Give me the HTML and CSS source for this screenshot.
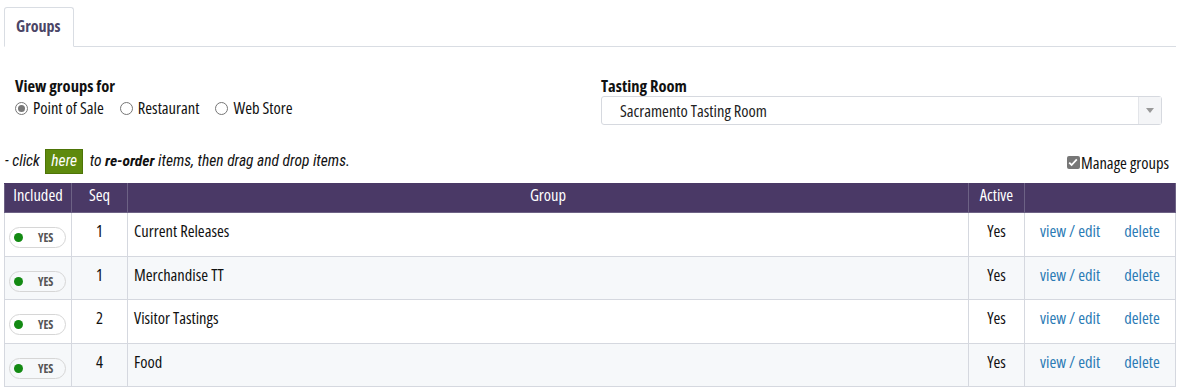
FILE: index.html
```html
<!DOCTYPE html>
<html>
<head>
<meta charset="utf-8">
<link rel="stylesheet" href="styles.css">
</head>
<body>
<div class="page">
  <div class="tabs">
    <div class="tab">Groups</div>
  </div>
  <div class="filters">
    <div class="filter-left">
      <div class="label">View groups for</div>
      <div class="radios">
        <label class="radio"><span class="rb checked"></span>Point of Sale</label>
        <label class="radio"><span class="rb"></span>Restaurant</label>
        <label class="radio"><span class="rb"></span>Web Store</label>
      </div>
    </div>
    <div class="filter-right">
      <div class="label">Tasting Room</div>
      <div class="select">
        <span class="select-text">Sacramento Tasting Room</span>
        <span class="select-arrow"><svg width="8" height="5" viewBox="0 0 8 5"><path d="M0 0h8L4 5z" fill="#999"/></svg></span>
      </div>
    </div>
  </div>
  <div class="toolbar">
    <div class="hint">- click <span class="here">here</span> to <b>re-order</b> items, then drag and drop items.</div>
    <label class="manage"><span class="cb"><svg width="10" height="9" viewBox="0 0 10 9"><path d="M1.2 4.6l2.4 2.4L8.8 1.4" stroke="#fff" stroke-width="1.8" fill="none"/></svg></span>Manage groups</label>
  </div>
  <table class="grid">
    <colgroup>
      <col class="w-inc"><col class="w-seq"><col><col class="w-act"><col class="w-ops">
    </colgroup>
    <thead>
      <tr>
        <th>Included</th>
        <th>Seq</th>
        <th>Group</th>
        <th>Active</th>
        <th></th>
      </tr>
    </thead>
    <tbody>
      <tr>
        <td class="c-inc"><span class="toggle"><span class="dot"></span>YES</span></td>
        <td class="c-seq">1</td>
        <td class="c-grp">Current Releases</td>
        <td class="c-act">Yes</td>
        <td class="c-ops"><a>view / edit</a><a>delete</a></td>
      </tr>
      <tr>
        <td class="c-inc"><span class="toggle"><span class="dot"></span>YES</span></td>
        <td class="c-seq">1</td>
        <td class="c-grp">Merchandise TT</td>
        <td class="c-act">Yes</td>
        <td class="c-ops"><a>view / edit</a><a>delete</a></td>
      </tr>
      <tr>
        <td class="c-inc"><span class="toggle"><span class="dot"></span>YES</span></td>
        <td class="c-seq">2</td>
        <td class="c-grp">Visitor Tastings</td>
        <td class="c-act">Yes</td>
        <td class="c-ops"><a>view / edit</a><a>delete</a></td>
      </tr>
      <tr>
        <td class="c-inc"><span class="toggle"><span class="dot"></span>YES</span></td>
        <td class="c-seq">4</td>
        <td class="c-grp">Food</td>
        <td class="c-act">Yes</td>
        <td class="c-ops"><a>view / edit</a><a>delete</a></td>
      </tr>
    </tbody>
  </table>
</div>
</body>
</html>
```
FILE: styles.css
```css
* { box-sizing: border-box; }
body {
  margin: 0;
  font-family: "Open Sans", "Roboto", sans-serif;
  font-stretch: 75%;
  font-size: 16.5px;
  color: #111;
  background: #fff;
}
.page { padding: 7px 11px 0 4px; }
.tabs {
  display: flex;
  border-bottom: 1px solid #d9dde3;
  height: 40px;
}
.tab {
  width: 70px;
  height: 40px;
  border: 1px solid #d9dde3;
  border-bottom: 1px solid #fff;
  border-radius: 3px 3px 0 0;
  font-weight: bold;
  font-size: 16px;
  line-height: 20px;
  color: #4b4566;
  padding: 8px 0 0 11px;
  background: #fff;
}
.filters {
  display: flex;
  padding: 29px 0 0 11px;
}
.filter-left { width: 586px; }
.filter-right { width: 561px; }
.label { font-weight: bold; line-height: 20px; }
.radios { display: flex; gap: 16px; margin-top: 2px; line-height: 20px; }
.radio { display: flex; align-items: center; }
.rb {
  width: 13px; height: 13px; border-radius: 50%;
  border: 1px solid #767676; margin-right: 5px; background: #fff;
  display: inline-block; position: relative;
}
.rb.checked { border-color: #777; }
.rb.checked::after {
  content: ""; position: absolute; left: 2px; top: 2px;
  width: 7px; height: 7px; border-radius: 50%; background: #777;
}
.select {
  margin-top: 0;
  height: 29px;
  border: 1px solid #d6d9df;
  border-radius: 3px;
  display: flex;
  align-items: center;
  justify-content: space-between;
}
.select-text { padding-left: 18px; color: #222; }
.select-arrow {
  width: 23px; height: 27px; border-left: 1px solid #e3e5e9;
  background: #f4f5f7; display: flex; align-items: center; justify-content: center;
}
.toolbar {
  display: flex;
  justify-content: space-between;
  align-items: center;
  margin-top: 23px;
  height: 26px;
}
.hint {
  font-family: "Roboto Condensed", "Roboto", sans-serif;
  font-stretch: 75%;
  font-size: 15.5px;
  font-style: italic;
  padding-left: 1px;
}
.here {
  display: inline-block;
  background: #5e8a0d;
  color: #fff;
  padding: 2px 5px 3px;
  border: 1px solid #4d7407;
  margin: 0 3px 0 2px;
}
.manage { display: flex; align-items: center; margin-top: 2px; padding-right: 7px; }
.cb {
  width: 13px; height: 13px; background: #777; border-radius: 2px;
  display: inline-flex; align-items: center; justify-content: center; margin-right: 1px;
}
.grid {
  margin-top: 9px;
  width: 1172px;
  border-collapse: collapse;
  table-layout: fixed;
}
.w-inc { width: 67px; }
.w-seq { width: 56px; }
.w-act { width: 56px; }
.w-ops { width: 151px; }
.grid th {
  background: #4a3966;
  color: #fff;
  font-weight: normal;
  height: 29px;
  border: 1px solid #6d6285;
  border-top: 1px solid #4a3966;
  text-align: center;
  vertical-align: top;
  padding: 0;
  line-height: 22px;
}
.grid td {
  border: 1px solid #d5d8df;
  height: 43.5px;
  padding: 0;
  vertical-align: top;
  padding-top: 6px;
}
.grid tbody tr:nth-child(even) td { background: #f6f8fa; }
.c-seq, .c-act { text-align: center; }
.grid td.c-grp { padding-left: 6px; }
.c-ops { white-space: nowrap; }
.grid td.c-ops { padding-left: 15px; }
.c-ops a { color: #2b7bb5; margin-right: 24px; }
.grid td.c-inc { padding-top: 11px; padding-left: 4px; }
.toggle {
  display: inline-flex; align-items: center;
  width: 57px; height: 21px;
  border: 1px solid #d6d6d6; border-radius: 11px;
  font-size: 11.5px; font-weight: bold; color: #555;
  padding-left: 4px;
}
.dot {
  width: 9px; height: 9px; border-radius: 50%; background: #138a13;
  margin-right: 15px;
}
```
